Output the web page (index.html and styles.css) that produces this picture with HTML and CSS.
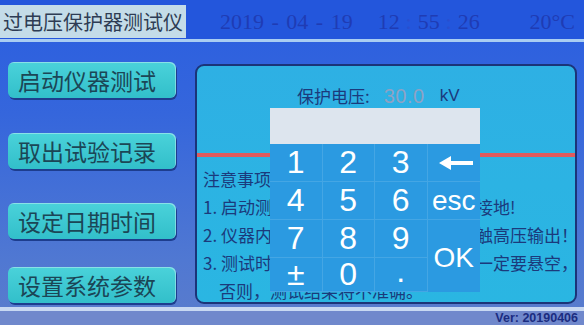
FILE: index.html
```html
<!DOCTYPE html>
<html lang="zh-CN">
<head>
<meta charset="utf-8">
<title>过电压保护器测试仪</title>
<link rel="stylesheet" href="styles.css">
</head>
<body>
<div class="screen">
  <header class="topbar">
    <div class="title">过电压保护器测试仪</div>
    <div class="date">2019 - 04 - 19</div>
    <div class="time">12<span class="colon">:</span>55<span class="colon">:</span>26</div>
    <div class="temp">20°C</div>
  </header>
  <div class="rule-top"></div>
  <main class="main">
    <nav class="menu">
      <div class="btn">启动仪器测试</div>
      <div class="btn">取出试验记录</div>
      <div class="btn">设定日期时间</div>
      <div class="btn">设置系统参数</div>
    </nav>
    <section class="panel">
      <div class="setting">
        <span class="label">保护电压:</span>
        <span class="value">30.0</span>
        <span class="unit">kV</span>
      </div>
      <div class="redline"></div>
      <div class="notes">
        <div class="note">注意事项：</div>
        <div class="note">1. 启动测试前，请先确认仪器已可靠接地!</div>
        <div class="note">2. 仪器内部带有高压，测试时请勿接触高压输出！</div>
        <div class="note">3. 测试时，被试品的高压端与接地端一定要悬空，</div>
        <div class="note cont">否则，测试结果将不准确。</div>
      </div>
      <div class="keypad">
        <div class="input"></div>
        <div class="keys">
          <div class="key">1</div>
          <div class="key">2</div>
          <div class="key">3</div>
          <div class="key"><svg class="arrow" width="34" height="14" viewBox="0 0 34 14"><polygon points="0,7 12,0 12,14" fill="#fff"/><rect x="10" y="5" width="24" height="4" fill="#fff"/></svg></div>
          <div class="key">4</div>
          <div class="key">5</div>
          <div class="key">6</div>
          <div class="key word">esc</div>
          <div class="key">7</div>
          <div class="key">8</div>
          <div class="key">9</div>
          <div class="key word ok">OK</div>
          <div class="key">±</div>
          <div class="key">0</div>
          <div class="key dot">.</div>
        </div>
      </div>
    </section>
  </main>
  <div class="rule-bottom"></div>
  <footer class="footer">Ver: 20190406</footer>
</div>
</body>
</html>
```

FILE: styles.css
```css
* { box-sizing: border-box; }
html, body { margin: 0; padding: 0; }
body {
  width: 584px;
  height: 325px;
  overflow: hidden;
  font-family: "Noto Sans CJK SC", "Noto Sans", sans-serif;
}
.screen {
  width: 584px;
  height: 325px;
  display: flex;
  flex-direction: column;
  background: linear-gradient(to bottom, #2a5ee0 0%, #3566dc 35%, #5078d2 80%, #5a7ccc 100%);
}

/* top bar */
.topbar {
  height: 39px;
  padding-top: 5px;
  display: flex;
  align-items: stretch;
  background: #2356dc;
  color: #1f3cb4;
}
.title {
  width: 186px;
  height: 33px;
  line-height: 33px;
  padding-left: 3px;
  font-size: 20px;
  color: #2e3c54;
  background: #c4dce8;
  white-space: nowrap;
}
.date, .time, .temp {
  font-family: "Liberation Serif", serif;
  font-size: 22px;
  line-height: 33px;
  white-space: nowrap;
}
.date { margin-left: 34px; word-spacing: 2px; }
.time { margin-left: 25px; }
.colon { color: #2a4ecf; display: inline-block; width: 18px; text-align: center; }
.temp { margin-left: auto; padding-right: 9px; }

.rule-top {
  height: 3px;
  background: #a9cdf2;
}

/* main */
.main {
  flex: 1;
  display: flex;
  padding: 20px 7px 0 8px;
}
.menu {
  width: 168px;
  display: flex;
  flex-direction: column;
}
.btn {
  height: 36px;
  line-height: 36px;
  padding-left: 10px;
  font-size: 23px;
  color: #1b4656;
  background: linear-gradient(to bottom, #4ad2da, #32bfca);
  border-radius: 6px;
  box-shadow: 1px 2px 0 #1d3d8e, inset -1px 1px 0 rgba(255,255,255,0.35);
  white-space: nowrap;
}
.btn:nth-child(2) { margin-top: 35px; }
.btn:nth-child(3) { margin-top: 34px; }
.btn:nth-child(4) { margin-top: 28px; }

.panel {
  position: relative;
  width: 382px;
  height: 240px;
  margin-top: 2px;
  margin-left: 19px;
  padding-top: 20px;
  background: linear-gradient(to bottom, #2eb0e4, #2ab6e2);
  border: 2px solid #1b3478;
  border-radius: 9px;
  color: #1b3a7c;
  overflow: hidden;
}
.setting {
  height: 20px;
  line-height: 20px;
  padding-left: 100px;
  display: flex;
  align-items: center;
  white-space: nowrap;
}
.label { font-size: 17px; }
.value {
  margin-left: 14px;
  font-family: "Liberation Sans", sans-serif;
  font-size: 20px;
  letter-spacing: 0.5px;
  color: #8ea2c4;
}
.unit {
  margin-left: 15px;
  font-family: "Liberation Sans", sans-serif;
  font-size: 17px;
}
.redline {
  height: 4px;
  margin-top: 47px;
  background: #e05a5c;
}
.notes {
  margin-top: 8px;
  padding-left: 6px;
  font-size: 17px;
  line-height: 28px;
  white-space: nowrap;
}
.note.cont { padding-left: 16px; }

/* keypad overlay */
.keypad {
  position: absolute;
  left: 73px;
  top: 42px;
  width: 210px;
  background: #2b9ae1;
}
.input {
  height: 36px;
  background: #dde5ee;
}
.keys {
  display: grid;
  grid-template-columns: repeat(4, 1fr);
  grid-template-rows: 38px 38px 38px 34px;
}
.key {
  display: flex;
  align-items: center;
  justify-content: center;
  font-family: "Liberation Sans", sans-serif;
  font-size: 32px;
  color: #fff;
  border-right: 1px solid rgba(255,255,255,0.12);
  border-bottom: 1px solid rgba(255,255,255,0.12);
}
.key:nth-child(4n) { border-right: none; }
.key.word { font-size: 28px; }
.key.ok {
  grid-column: 4;
  grid-row: 3 / span 2;
  border-bottom: none;
  padding-top: 4px;
}
.key.dot { padding-bottom: 6px; }
.arrow { display: block; margin-left: 4px; }

/* bottom */
.rule-bottom {
  height: 4px;
  background: #c8d8f2;
}
.footer {
  height: 14px;
  line-height: 14px;
  padding-right: 6px;
  text-align: right;
  font-family: "Liberation Sans", sans-serif;
  font-weight: bold;
  font-size: 12.5px;
  color: #1b2c80;
  background: #7088cc;
}
```
